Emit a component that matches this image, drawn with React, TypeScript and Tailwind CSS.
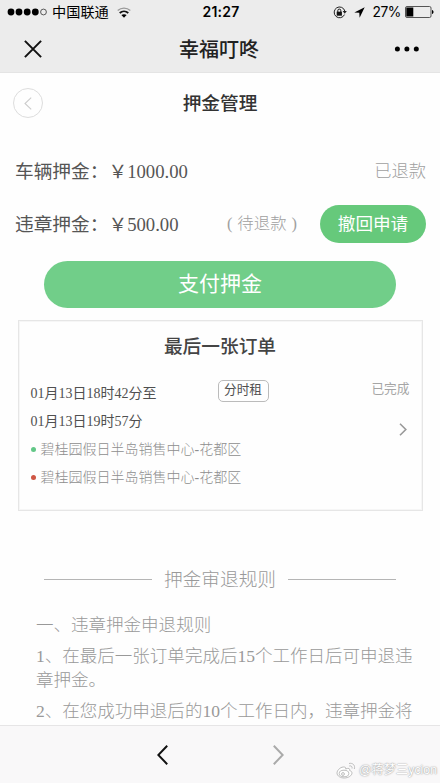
import type { ReactNode } from 'react'

const rules = [
  '一、违章押金申退规则',
  '1、在最后一张订单完成后15个工作日后可申退违章押金。',
  '2、在您成功申退后的10个工作日内，违章押金将',
]

const stops = [
  { color: 'bg-[#62c787]', name: '碧桂园假日半岛销售中心-花都区' },
  { color: 'bg-[#cf5644]', name: '碧桂园假日半岛销售中心-花都区' },
]

const StatusBar = () => (
  <div className="grid h-6 grid-cols-[1fr_auto_1fr] items-center pl-[7px] pr-[6px] text-black">
    <div className="flex items-center">
      <svg width="40" height="8" viewBox="0 0 40 8">
        <circle cx="4" cy="4" r="3.4" />
        <circle cx="12" cy="4" r="3.4" />
        <circle cx="20.2" cy="4" r="3.4" />
        <circle cx="28.3" cy="4" r="3.4" />
        <circle cx="36.5" cy="4" r="2.9" fill="none" stroke="#333" strokeWidth="0.8" />
      </svg>
      <span className="ml-[5px] text-[14.2px] leading-6">中国联通</span>
      <svg className="ml-[8px]" width="14" height="11" viewBox="0 0 14 11" fill="none">
        <path d="M0.7 3.6C4.3 0.3 9.7 0.3 13.3 3.6" stroke="#999" strokeWidth="1.3" />
        <path d="M2.7 6C5.2 3.7 8.8 3.7 11.3 6" stroke="#111" strokeWidth="1.7" />
        <path d="M7 10.7L4.4 8.1C5.9 6.8 8.1 6.8 9.6 8.1Z" fill="#000" />
      </svg>
    </div>
    <span className="pl-px text-[14px] font-semibold leading-6 tracking-[0.25px]">21:27</span>
    <div className="flex items-center justify-end">
      <svg width="14" height="13" viewBox="0 0 14 13" fill="none">
        <path d="M11.5 8.6A5.4 5.4 0 1 1 11.8 5" stroke="#222" strokeWidth="1" />
        <path d="M9.6 5H13.8L11.8 7.8Z" fill="#222" />
        <rect x="3.7" y="5.7" width="5.2" height="4" fill="#111" />
        <path d="M4.8 6V4.6a1.5 1.5 0 0 1 3 0V6" stroke="#111" strokeWidth="1" />
      </svg>
      <svg className="ml-[7px]" width="11" height="11" viewBox="0 0 11 11">
        <path d="M10.7 0.3L0.3 5.4L5.3 5.7L5.6 10.7Z" />
      </svg>
      <span className="ml-[7px] text-[13.8px] leading-6 tracking-[-0.4px]">27%</span>
      <svg className="ml-[4px]" width="29" height="12" viewBox="0 0 29 12">
        <rect x="0.5" y="0.5" width="25.5" height="11" rx="1.5" fill="none" stroke="#444" strokeWidth="0.9" />
        <rect x="1.3" y="1.5" width="7" height="9" />
        <path d="M27 4C29 4.3 29 7.7 27 8Z" />
      </svg>
    </div>
  </div>
)

const NavBar = () => (
  <div className="grid h-[49px] grid-cols-[1fr_auto_1fr] items-center border-b border-[#e4e4e4] pl-6 pr-[20px] pt-[2px]">
    <svg width="18" height="18" viewBox="0 0 18 18" stroke="#111" strokeWidth="2">
      <path d="M0.9 0.9L17.1 17.1M17.1 0.9L0.9 17.1" />
    </svg>
    <h1 className="-ml-[6px] pt-[2px] text-[20px] font-medium leading-7 text-[#222]">幸福叮咚</h1>
    <svg className="justify-self-end" width="26" height="6" viewBox="0 0 26 6">
      <circle cx="3.4" cy="3" r="2.5" />
      <circle cx="12.9" cy="3" r="2.5" />
      <circle cx="22.3" cy="3" r="2.5" />
    </svg>
  </div>
)

const DepositRow = ({ label, amount, children }: { label: string; amount: string; children: ReactNode }) => (
  <div className="flex h-[53px] items-center pl-[15px] text-[#555]">
    <span className="whitespace-nowrap pt-[3px]">{label}：￥{amount}</span>
    {children}
  </div>
)

const OrderCard = () => (
  <section className="mx-auto mt-3 h-[191px] w-[405px] border-[1.5px] border-[#e6e6e6] pl-3 pr-3 shadow-[inset_0_0_0_1px_#f6f6f6]">
    <h3 className="pt-[12px] text-center text-[18.7px] font-medium leading-7 text-[#444]">最后一张订单</h3>
    <div className="mt-[18px] flex h-7 items-center text-[14px] text-[#505050]">
      <span className="w-[187px]">01月13日18时42分至</span>
      <span className="mb-[5px] flex h-[22px] w-[51px] items-center justify-center rounded-[5px] border border-[#bbb] pt-px text-[12.7px]">
        分时租
      </span>
      <span className="mb-[7px] ml-auto text-[12.7px] text-[#a5a5a5]">已完成</span>
    </div>
    <div className="flex h-7 items-center justify-between text-[14px] text-[#505050]">
      <span>01月13日19时57分</span>
      <svg className="mr-[3px] mt-[16px]" width="8" height="13" viewBox="0 0 8 13" fill="none" stroke="#999" strokeWidth="1.6">
        <path d="M1 0.8L6.8 6.5L1 12.2" />
      </svg>
    </div>
    {stops.map((stop) => (
      <div key={stop.color} className="flex h-7 items-center gap-[5px] text-[14px] font-light text-[#8e8e8e]">
        <i className={`size-[5px] rounded-full ${stop.color}`} />
        <span>{stop.name}</span>
      </div>
    ))}
  </section>
)

const BottomBar = () => (
  <div className="relative flex h-[58px] shrink-0 items-center justify-center gap-[105px] border-t border-[#e6e5e6] bg-[#f9f8f9]">
    <svg width="11" height="20" viewBox="0 0 11 20" fill="none" stroke="#111" strokeWidth="2">
      <path d="M10.2 0.8L1.3 10L10.2 19.2" />
    </svg>
    <svg width="11" height="20" viewBox="0 0 11 20" fill="none" stroke="#aaa" strokeWidth="2">
      <path d="M0.8 0.8L9.7 10L0.8 19.2" />
    </svg>
    {/* watermark */}
    <div className="absolute bottom-[4px] right-[3px] flex items-center gap-[3px] text-[12.3px] leading-[18px] text-white">
      <svg width="20" height="17" viewBox="0 0 20 17" fill="none" stroke="#b5b5b5" strokeWidth="0.9">
        <path d="M7.2 5C4 5.3 1 8.5 1 11C1 14 4.5 16 8.2 16C12.5 16 16 13.5 16 11C16 9.6 14.8 8.9 13.7 8.6C14.3 6.3 12.5 5.8 9.7 7C10.2 5.5 9 4.8 7.2 5Z" fill="#fff" />
        <ellipse cx="8" cy="11.5" rx="4.8" ry="3.3" />
        <circle cx="7" cy="12" r="1.4" />
        <path d="M13 1.5C16.8 0.5 19.5 3.5 18.3 7M13.2 4C15.3 3.4 16.5 4.8 16 6.5" />
      </svg>
      <span className="whitespace-nowrap font-['Liberation_Sans','Noto_Sans_CJK_SC',sans-serif] [text-shadow:0_0_1px_#999,0_0_2px_#aaa]">
        @蒋梦三ycion
      </span>
    </div>
  </div>
)

export default function App() {
  return (
    <div className="flex h-[783px] w-[440px] flex-col overflow-hidden bg-[#fefefe] font-['Liberation_Serif','Noto_Sans_CJK_SC',serif]">
      <header className="shrink-0 bg-[#ececec] font-['Inter','Noto_Sans_CJK_SC',sans-serif]">
        <StatusBar />
        <NavBar />
      </header>

      <main className="min-h-0 flex-1 overflow-hidden text-[18.7px]">
        <div className="grid h-[60px] grid-cols-[1fr_auto_1fr] items-center px-[13px]">
          <span className="flex size-[30px] items-center justify-center rounded-full border border-[#ddd]">
            <svg className="mr-[1px]" width="8" height="13" viewBox="0 0 8 13" fill="none" stroke="#ccc" strokeWidth="1.1">
              <path d="M7.2 0.6L1 6.5L7.2 12.4" />
            </svg>
          </span>
          <h2 className="pt-px font-medium leading-7 text-[#333]">押金管理</h2>
        </div>

        <div className="pt-[11px]">
          <DepositRow label="车辆押金" amount="1000.00">
            <span className="ml-auto pr-[14px] pt-[2px] text-[17.3px] font-light text-[#a0a0a0]">已退款</span>
          </DepositRow>
          <DepositRow label="违章押金" amount="500.00">
            <span className="ml-auto flex gap-[5px] pt-[2px] text-[16.4px] font-light text-[#a0a0a0]">
              <span>(</span>待退款<span>)</span>
            </span>
            <button className="ml-[23px] mr-[14px] h-[38px] w-[106px] rounded-full bg-[#66c97b] pt-px text-[17.6px] text-white">
              撤回申请
            </button>
          </DepositRow>
        </div>

        <button className="mx-auto mt-[11px] block h-[47px] w-[352px] rounded-full bg-[#71ce89] pt-px text-[21px] text-white">
          支付押金
        </button>

        <OrderCard />

        <div className="mx-11 mt-[54px] flex h-7 items-center justify-between font-light text-[#999]">
          <i className="h-px w-[108px] bg-[#b5b5b5]" />
          <span className="pt-[2px]">押金审退规则</span>
          <i className="h-px w-[108px] bg-[#b5b5b5]" />
        </div>

        <div className="flex flex-col gap-[6px] pl-[36px] pr-[26px] pt-[20px] text-[17.53px] font-light leading-[24.5px] text-[#999]">
          {rules.map((rule) => (
            <p key={rule}>{rule}</p>
          ))}
        </div>
      </main>

      <BottomBar />
    </div>
  )
}
